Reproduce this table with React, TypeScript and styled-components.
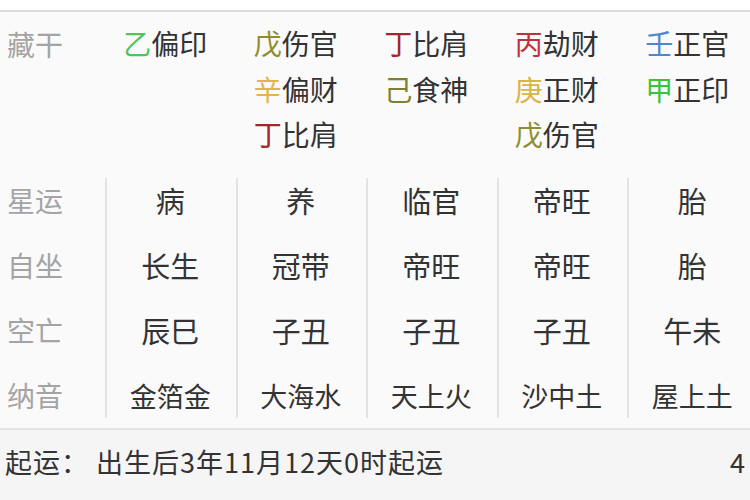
import React from "react";
import styled, { createGlobalStyle } from "styled-components";

const Global = createGlobalStyle`
  html, body { margin: 0; padding: 0; background: #fafafa; }
  body { font-family: "Noto Sans CJK SC", "Noto Sans", sans-serif; }
`;

const Page = styled.div`
  width: 750px;
  height: 500px;
  overflow: hidden;
  background: #fafafa;
  display: flex;
  flex-direction: column;
`;

const TopStrip = styled.div`
  height: 10px;
  flex: none;
  background: #ffffff;
  border-bottom: 2px solid #dcdcdc;
`;

const Grid = styled.div`
  display: grid;
  grid-template-columns: 105px repeat(5, 130.5px);
  flex: none;
`;

const HiddenSection = styled(Grid)`
  padding: 9px 0 10px;
`;

const Label = styled.div`
  padding-left: 7px;
  font-size: 28px;
  color: #a4a4a4;
  line-height: 46px;
  height: 46px;
`;

const StemCell = styled.div`
  display: flex;
  flex-direction: column;
  align-items: center;
  padding-right: 10px;
`;

const StemLine = styled.div`
  font-size: 28px;
  line-height: 45.5px;
  color: #333;
  white-space: nowrap;
`;

const Stem = styled.span<{ $c: string }>`
  color: ${(p) => p.$c};
`;

const TableSection = styled(Grid)`
  height: 260px;
`;

const Column = styled.div<{ $divider?: boolean }>`
  display: flex;
  flex-direction: column;
  background: ${(p) =>
    p.$divider
      ? "linear-gradient(#e3e3e3, #e3e3e3) left 0 top 10px / 2px calc(100% - 20px) no-repeat"
      : "none"};
`;

const RowLabel = styled.div`
  height: 65px;
  display: flex;
  align-items: center;
  padding-left: 7px;
  font-size: 28px;
  color: #a4a4a4;
`;

const Value = styled.div<{ $small?: boolean }>`
  height: 65px;
  display: flex;
  align-items: center;
  justify-content: center;
  font-size: ${(p) => (p.$small ? "27px" : "29px")};
  color: #333;
  white-space: nowrap;
`;

const Footer = styled.div`
  flex: 1;
  border-top: 2px solid #e2e2e2;
  background: #f5f5f5;
  display: flex;
  flex-direction: column;
`;

const FooterRow = styled.div`
  display: flex;
  justify-content: space-between;
  align-items: center;
  height: 64px;
  padding: 0 4px 0 5px;
  font-size: 27px;
  letter-spacing: 1px;
  color: #333;
  white-space: nowrap;
`;

const NextRow = styled(FooterRow)`
  height: 30px;
  align-items: flex-start;
  padding-top: 2px;
  color: #444;
`;

const C = {
  yi: "#52c45e",
  wu: "#8e8f2c",
  xin: "#e2b54a",
  ding: "#a3262c",
  bing: "#c4303a",
  ji: "#7d8030",
  geng: "#d9b546",
  ren: "#4f86cf",
  jia: "#38c43d",
};

type StemItem = { s: string; c: string; t: string };

const hidden: StemItem[][] = [
  [{ s: "乙", c: C.yi, t: "偏印" }],
  [
    { s: "戊", c: C.wu, t: "伤官" },
    { s: "辛", c: C.xin, t: "偏财" },
    { s: "丁", c: C.ding, t: "比肩" },
  ],
  [
    { s: "丁", c: C.ding, t: "比肩" },
    { s: "己", c: C.ji, t: "食神" },
  ],
  [
    { s: "丙", c: C.bing, t: "劫财" },
    { s: "庚", c: C.geng, t: "正财" },
    { s: "戊", c: C.wu, t: "伤官" },
  ],
  [
    { s: "壬", c: C.ren, t: "正官" },
    { s: "甲", c: C.jia, t: "正印" },
  ],
];

const labels = ["星运", "自坐", "空亡", "纳音"];

const columns = [
  ["病", "长生", "辰巳", "金箔金"],
  ["养", "冠带", "子丑", "大海水"],
  ["临官", "帝旺", "子丑", "天上火"],
  ["帝旺", "帝旺", "子丑", "沙中土"],
  ["胎", "胎", "午未", "屋上土"],
];

export default function App() {
  return (
    <Page>
      <Global />
      <TopStrip />
      <HiddenSection>
        <Label>藏干</Label>
        {hidden.map((col, i) => (
          <StemCell key={i}>
            {col.map((h, j) => (
              <StemLine key={j}>
                <Stem $c={h.c}>{h.s}</Stem>
                {h.t}
              </StemLine>
            ))}
          </StemCell>
        ))}
      </HiddenSection>
      <TableSection>
        <Column>
          {labels.map((l) => (
            <RowLabel key={l}>{l}</RowLabel>
          ))}
        </Column>
        {columns.map((col, i) => (
          <Column key={i} $divider>
            {col.map((v, j) => (
              <Value key={j} $small={j === 3}>
                {v}
              </Value>
            ))}
          </Column>
        ))}
      </TableSection>
      <Footer>
        <FooterRow>
          <span>起运：&nbsp;出生后3年11月12天0时起运</span>
          <span>4</span>
        </FooterRow>
        <NextRow>
          <span>小运&nbsp;&nbsp;戊子&nbsp;&nbsp;己丑&nbsp;&nbsp;庚寅&nbsp;&nbsp;辛卯&nbsp;&nbsp;壬辰</span>
          <span>甲午</span>
        </NextRow>
      </Footer>
    </Page>
  );
}
